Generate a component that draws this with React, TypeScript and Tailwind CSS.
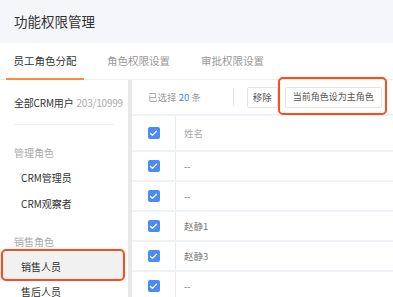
import { Check } from 'lucide-react';

const font = { fontFamily: '"Noto Sans CJK SC", "Noto Sans", sans-serif' };

const rows = ['--', '--', '赵静1', '赵静3', '--'];

function Box() {
  return (
    <div className="w-[12px] h-[12px] rounded-[2px] bg-[#4b8bf4] flex items-center justify-center">
      <Check size={9} strokeWidth={3.5} className="text-white" />
    </div>
  );
}

export default function App() {
  return (
    <div className="w-[393px] h-[297px] overflow-hidden bg-white text-[#333]" style={font}>
      {/* Title */}
      <div className="h-[43px] bg-[#f5f6f9] flex items-center pl-[14px] text-[13.5px] text-[#333]">
        功能权限管理
      </div>

      {/* Tabs */}
      <div className="h-[37px] flex items-stretch border-b border-[#eceef2] text-[10.5px]">
        <div className="relative w-[78px] ml-[6px] flex items-center justify-center text-[#333]">
          员工角色分配
          <div className="absolute left-0 right-0 bottom-[-1px] h-[2px] bg-[#ff8a3d]" />
        </div>
        <div className="ml-[23px] flex items-center text-[#999]">角色权限设置</div>
        <div className="ml-[31px] flex items-center text-[#999]">审批权限设置</div>
      </div>

      <div className="flex h-[217px]">
        {/* Left panel */}
        <div className="w-[128px] text-[10px] whitespace-nowrap">
          <div className="mx-[14px] h-[45px] flex items-center border-b border-[#eeeeee] tracking-[-0.2px]">
            <span className="text-[#333]">全部CRM用户</span>
            <span className="ml-[3px] text-[#aaa]">203/10999</span>
          </div>
          <div className="mt-[15px] h-[24px] flex items-center pl-[14px] text-[#aaa]">管理角色</div>
          <div className="h-[26px] flex items-center pl-[21px]">CRM管理员</div>
          <div className="h-[26px] flex items-center pl-[21px]">CRM观察者</div>
          <div className="mt-[14px] h-[22px] flex items-center pl-[14px] text-[#aaa]">销售角色</div>
          <div className="relative h-[28px] w-[124px] flex items-center pl-[21px] bg-[#f1f1f1]">
            销售人员
            <div className="absolute left-[1px] right-[-1px] top-[-3px] bottom-[-1px] border-2 border-[#ff4a1c] rounded-[5px]" />
          </div>
          <div className="h-[22px] flex items-center pl-[21px]">售后人员</div>
        </div>

        {/* Divider strip */}
        <div className="w-[4px] bg-[#e8e8e8]" />

        {/* Right panel */}
        <div className="flex-1">
          <div className="h-[36px] flex items-center border-b-2 border-[#eef2f7] pl-[16px]">
            <span className="text-[9.5px] text-[#999]">
              已选择 <span className="text-[#3d86f0]">20</span> 条
            </span>
            <div className="ml-[32px] w-px h-[18px] bg-[#e6e6e6]" />
            <div className="ml-[13px] h-[21px] px-[5px] flex items-center border border-[#e3e3e3] rounded-[2px] text-[9.5px] text-[#555]">
              移除
            </div>
            <div className="relative ml-[7px] h-[21px] px-[7px] flex items-center border border-[#e3e3e3] rounded-[2px] text-[9px] text-[#555]">
              当前角色设为主角色
              <div className="absolute left-[-8px] right-[-6px] top-[-11px] bottom-[-8px] border-2 border-[#ff4a1c] rounded-[5px]" />
            </div>
          </div>

          <div className="h-[36px] flex border-b-2 border-[#eef2f7]">
            <div className="w-[44px] flex items-center justify-center border-r border-[#e6ecf3]">
              <Box />
            </div>
            <div className="pl-[8px] flex items-center text-[9.5px] text-[#aaa]">姓名</div>
          </div>
          {rows.map((r, i) => (
            <div key={i} className="h-[30px] flex border-b-2 border-[#eef2f7]">
              <div className="w-[44px] flex items-center justify-center border-r border-[#e6ecf3]">
                <Box />
              </div>
              <div className="pl-[8px] flex items-center text-[9.5px] text-[#777]">{r}</div>
            </div>
          ))}
        </div>
      </div>
    </div>
  );
}
